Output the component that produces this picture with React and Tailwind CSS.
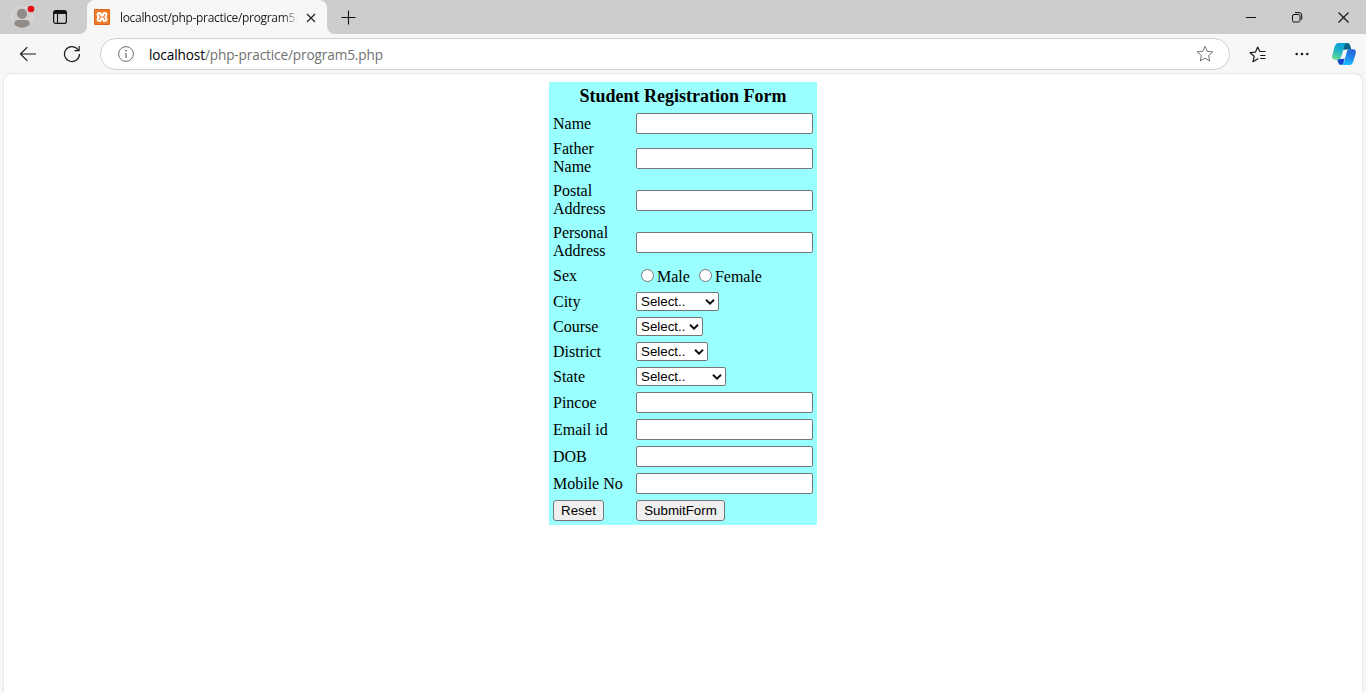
import React from "react";

function Favicon() {
  return (
    <svg width="16" height="16" viewBox="0 0 16 16">
      <rect width="16" height="16" rx="1" fill="#f07d2b" />
      <rect x="0.5" y="0.5" width="15" height="15" rx="1" fill="none" stroke="#dc6415" />
      <path
        d="M5.4 4.1C3.9 4.1 3.2 5.2 3.8 6.4L4.6 8L3.8 9.6C3.2 10.8 3.9 11.9 5.4 11.9C6.8 11.9 7 11 7 9.5H9C9 11 9.2 11.9 10.6 11.9C12.1 11.9 12.8 10.8 12.2 9.6L11.4 8L12.2 6.4C12.8 5.2 12.1 4.1 10.6 4.1C9.2 4.1 9 5 9 6.5H7C7 5 6.8 4.1 5.4 4.1Z"
        fill="none"
        stroke="#fff"
        strokeWidth="2"
        strokeLinejoin="round"
      />
    </svg>
  );
}

function Copilot() {
  return (
    <svg width="26" height="24" viewBox="0 0 26 24">
      <defs>
        <linearGradient id="cpA" x1="0.6" y1="0" x2="0.3" y2="1">
          <stop offset="0" stopColor="#0a9fd8" />
          <stop offset="0.5" stopColor="#20b5c6" />
          <stop offset="1" stopColor="#6fdc93" />
        </linearGradient>
        <linearGradient id="cpB" x1="0.7" y1="0" x2="0.4" y2="1">
          <stop offset="0" stopColor="#2b62d9" />
          <stop offset="0.5" stopColor="#1f86ee" />
          <stop offset="1" stopColor="#18bdfa" />
        </linearGradient>
      </defs>
      <path d="M13 1H16.2C18 1 18.7 2 19.2 3.6L20.4 7.4H15.5L12 8Z" fill="#086387" />
      <path d="M6 17H11L13.6 16L12.2 22.8H10C8.2 22.8 7.6 21.8 7.1 20.2Z" fill="#1548cf" />
      <path d="M7.8 1H16C14.5 1.2 13.8 2.7 13.3 4.4L10.3 14.6C9.7 16.8 8.6 17.8 6.6 17.8H4C1.4 17.8 0.7 15.6 1.3 13.2L3.6 4.8C4.3 2.3 5.5 1 7.8 1Z" fill="url(#cpA)" />
      <path d="M18.4 7.2H22C24.6 7.2 25.3 9.2 24.7 11.6L22.4 19.2C21.7 21.6 20.5 22.9 18.2 22.9H10.6C12.1 22.5 12.7 21.2 13.2 19.6L15.6 10.5C16.1 8.4 16.8 7.2 18.4 7.2Z" fill="url(#cpB)" />
      <path d="M13.8 8H15.9L12.6 16.8H10.2Z" fill="#f7f7f7" />
    </svg>
  );
}

function TitleBar() {
  return (
    <div className="flex h-[34px] bg-[#f7f7f7]">
      <div className="flex w-[87px] rounded-br-[8px] bg-[#cdcdcd] pl-[11px] pt-[4px]">
        <svg width="24" height="25" viewBox="0 0 24 25" className="shrink-0">
          <circle cx="11" cy="13" r="10.5" fill="#d1cfcd" stroke="#dedcd9" />
          <circle cx="11" cy="9.8" r="5.1" fill="#918c88" />
          <path d="M3.2 20.2C3.2 17.4 5 16 7 16H15C17 16 18.8 17.4 18.8 20.2C17 22.3 14 23.8 11 23.8C8 23.8 5 22.3 3.2 20.2Z" fill="#918c88" />
          <circle cx="20" cy="5" r="3.3" fill="#e60b16" />
        </svg>
        <svg width="16" height="16" viewBox="0 0 16 16" className="ml-[17px] mt-[5px] shrink-0">
          <rect x="1.6" y="1.6" width="12.8" height="12.8" rx="2.2" fill="none" stroke="#111" strokeWidth="1.2" />
          <path d="M1.5 5V3.5Q1.5 1.5 3.5 1.5H12.5Q14.5 1.5 14.5 3.5V5Z" fill="#111" />
          <path d="M5.5 5V14" stroke="#111" strokeWidth="1.1" />
        </svg>
      </div>
      <div className="w-[240px] bg-[#cdcdcd]">
        <div className="flex h-full items-center rounded-t-[8px] bg-[#f7f7f7] pl-[7px]">
          <Favicon />
          <div className="ml-[10px] w-[178px] whitespace-nowrap bg-gradient-to-r from-[#1b1b1b] from-91% to-[#f7f7f7] bg-clip-text pt-[1px] text-[12px] tracking-[-0.32px] text-transparent">
            localhost/php-practice/program5.
          </div>
          <svg width="10" height="10" viewBox="0 0 10 10" className="ml-[8px] mt-[1px]">
            <path d="M1 1L9 9M9 1L1 9" stroke="#222" strokeWidth="1.2" />
          </svg>
        </div>
      </div>
      <div className="flex flex-1 items-center rounded-bl-[8px] bg-[#cdcdcd] pl-[14px]">
        <svg width="15" height="15" viewBox="0 0 15 15">
          <path d="M7.5 0.5V14.5M0.5 7.5H14.5" stroke="#111" strokeWidth="1.1" />
        </svg>
        <div className="ml-auto flex items-center pr-[17px]">
          <svg width="10" height="10" viewBox="0 0 10 10">
            <path d="M0 5.5H10" stroke="#111" />
          </svg>
          <svg width="11" height="11" viewBox="0 0 11 11" className="ml-[36px]">
            <rect x="0.5" y="2.5" width="7.5" height="7.5" rx="1.5" fill="none" stroke="#111" />
            <path d="M3 0.6H7.2Q9.7 0.6 9.7 3.1V7.8" fill="none" stroke="#111" />
          </svg>
          <svg width="11" height="11" viewBox="0 0 11 11" className="ml-[35px]">
            <path d="M0.5 0.5L10.5 10.5M10.5 0.5L0.5 10.5" stroke="#111" strokeWidth="1.1" />
          </svg>
        </div>
      </div>
    </div>
  );
}

function Toolbar() {
  return (
    <div className="flex h-[39px] items-center bg-[#f7f7f7] pl-[19px] pt-[1px]">
      <svg width="18" height="16" viewBox="0 0 18 16">
        <path d="M17 8H1.5M8.3 1.2L1.5 8L8.3 14.8" fill="none" stroke="#1b1b1b" strokeWidth="1.2" />
      </svg>
      <svg width="18" height="18" viewBox="0 0 18 18" className="ml-[26px]">
        <path d="M16.5 9A7.5 7.5 0 1 1 14.8 4.3L16 5.5M16.1 1V5.6H11.5" fill="none" stroke="#1b1b1b" strokeWidth="1.2" />
      </svg>
      <div className="ml-[19px] flex h-[32px] w-[1130px] items-center rounded-full border border-[#d0d0d0] bg-white pl-[17px]">
        <svg width="16" height="16" viewBox="0 0 16 16">
          <circle cx="8" cy="8" r="7.4" fill="none" stroke="#6e6e6e" />
          <path d="M8 7V12" stroke="#6e6e6e" strokeWidth="1.2" />
          <circle cx="8" cy="4.7" r="0.9" fill="#6e6e6e" />
        </svg>
        <div className="ml-[15px] pt-[1px] text-[13.6px] leading-[20px] tracking-[-0.12px] text-[#717171]">
          <span className="text-black">localhost</span>/php-practice/program5.php
        </div>
        <svg width="18" height="18" viewBox="0 0 18 18" className="ml-auto mr-[15px]">
          <path d="M9 1.3L11.2 6.3L16.8 6.9L12.6 10.5L13.8 16L9 13.2L4.2 16L5.4 10.5L1.2 6.9L6.8 6.3Z" fill="none" stroke="#747474" strokeLinejoin="round" />
        </svg>
      </div>
      <svg width="18" height="17" viewBox="0 0 18 17" className="ml-[19px]">
        <path d="M9.2 13.1L8.5 12.9L4 15.7L5.2 10.3L1.1 6.7L6.5 6.1L8.7 1.1L10.9 5.5H16.5M11.2 9.5H16.5M11.2 12.5H16.5" fill="none" stroke="#1b1b1b" strokeWidth="1.2" strokeLinejoin="round" />
      </svg>
      <svg width="14" height="4" viewBox="0 0 14 4" className="ml-[28px]">
        <circle cx="1.7" cy="2" r="1.3" fill="#1b1b1b" />
        <circle cx="7" cy="2" r="1.3" fill="#1b1b1b" />
        <circle cx="12.3" cy="2" r="1.3" fill="#1b1b1b" />
      </svg>
      <div className="ml-[22px]">
        <Copilot />
      </div>
    </div>
  );
}

const boxClass = "block h-[21px] w-[177px] rounded-[2px] border border-[#767676] bg-white px-[2px]";

function TextRow({ label }) {
  return (
    <div className="flex h-[27px] items-start pt-[3px]">
      <div className="w-[83px] leading-[21px]">{label}</div>
      <input type="text" className={boxClass} />
    </div>
  );
}

function TallRow({ first, second }) {
  return (
    <div className="flex h-[42px] items-start">
      <div className="w-[83px] pt-[3px] leading-[18px]">
        {first}
        <br />
        {second}
      </div>
      <input type="text" className={boxClass + " mt-[11px]"} />
    </div>
  );
}

function SelectRow({ label, width }) {
  return (
    <div className="flex h-[25px] items-start pt-[3px]">
      <div className="w-[83px] leading-[19px]">{label}</div>
      <button
        type="button"
        className={
          "flex h-[19px] items-center justify-between rounded-[2px] border border-[#767676] bg-white pl-[4px] pr-[3px] font-['Liberation_Sans',Arial,sans-serif] text-[13.333px] leading-[17px] " +
          width
        }
      >
        <span>Select..</span>
        <svg width="10" height="8" viewBox="0 0 10 8">
          <path d="M1 1.8L5 5.6L9 1.8" fill="none" stroke="#111" strokeWidth="2" />
        </svg>
      </button>
    </div>
  );
}

function Radio({ label }) {
  return (
    <label className="flex items-start">
      <span className="mt-[3px] block size-[13px] rounded-full border border-[#767676] bg-white" />
      <span className="ml-[3px] pt-[2px] leading-[18px]">{label}</span>
    </label>
  );
}

const buttonClass =
  "h-[21px] rounded-[3px] border border-[#767676] bg-[#efefef] text-center font-['Liberation_Sans',Arial,sans-serif] text-[13.333px] leading-[19px]";

function RegistrationForm() {
  return (
    <form className="mx-auto h-[443px] w-[268px] bg-[#99ffff] pl-[4px] font-['Liberation_Serif','Times_New_Roman',serif] text-[16px] text-black">
      <h3 className="h-[28px] pr-[4px] pt-[4px] text-center text-[18px] font-bold leading-[21px]">
        Student Registration Form
      </h3>
      <TextRow label="Name" />
      <TallRow first="Father" second="Name" />
      <TallRow first="Postal" second="Address" />
      <TallRow first="Personal" second="Address" />
      <div className="flex h-[26px] items-center">
        <div className="w-[83px] leading-[18px]">Sex</div>
        <div className="flex gap-[9px] pl-[5px]">
          <Radio label="Male" />
          <Radio label="Female" />
        </div>
      </div>
      <SelectRow label="City" width="w-[83px]" />
      <SelectRow label="Course" width="w-[67px]" />
      <SelectRow label="District" width="w-[72px]" />
      <SelectRow label="State" width="w-[90px]" />
      <TextRow label="Pincoe" />
      <TextRow label="Email id" />
      <TextRow label="DOB" />
      <TextRow label="Mobile No" />
      <div className="flex pt-[3px]">
        <div className="flex w-[83px]">
          <button type="reset" className={buttonClass + " w-[51px]"}>Reset</button>
        </div>
        <button type="button" className={buttonClass + " w-[89px]"}>SubmitForm</button>
      </div>
    </form>
  );
}

export default function App() {
  return (
    <div className="flex h-[692px] w-[1366px] flex-col overflow-hidden bg-[#f7f7f7] font-['Open_Sans','Noto_Sans',sans-serif]">
      <TitleBar />
      <Toolbar />
      <main className="mx-[4px] mt-[1px] flex-1 rounded-t-[7px] bg-white pt-[8px] shadow-[0_0_2px_rgba(0,0,0,0.22)]">
        <RegistrationForm />
      </main>
    </div>
  );
}
